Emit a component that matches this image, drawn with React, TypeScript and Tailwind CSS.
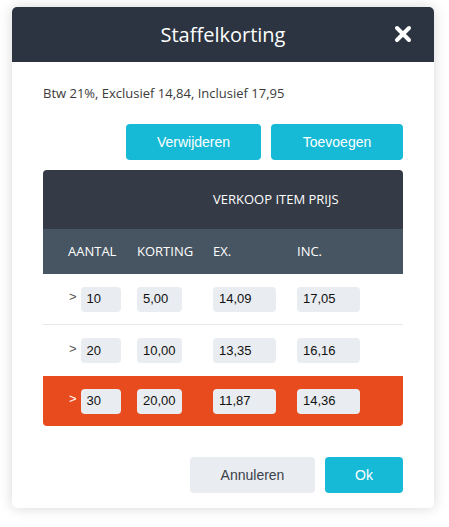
import { X } from 'lucide-react';

const rows = [
  { qty: '10', discount: '5,00', ex: '14,09', inc: '17,05', active: false },
  { qty: '20', discount: '10,00', ex: '13,35', inc: '16,16', active: false },
  { qty: '30', discount: '20,00', ex: '11,87', inc: '14,36', active: true },
];

const openSans = "font-['Open_Sans',sans-serif]";
const arial = "font-['Liberation_Sans',Arial,sans-serif]";

function Field({ value, width }: { value: string; width: string }) {
  return (
    <div className={`${width} h-[25px] rounded-[4px] bg-[#e9ecf0] pl-[6px] flex items-center text-[13px] text-[#111] ${arial}`}>
      {value}
    </div>
  );
}

export default function App() {
  return (
    <div className="min-h-screen w-full bg-white pt-[7px] pl-[12px]">
      <div className="w-[422px] rounded-[5px] bg-white shadow-[0_0_14px_rgba(0,0,0,0.16)] overflow-hidden">
        {/* Header */}
        <div className="relative h-[55px] bg-[#2b3440] flex items-center justify-center">
          <h1 className={`text-[20px] text-white ${openSans}`}>Staffelkorting</h1>
          <X className="absolute right-[19px] top-[15px] text-white" size={24} strokeWidth={4} />
        </div>

        <div className="px-[31px] pt-[22px] pb-[15px]">
          <p className={`text-[13px] leading-[18px] text-[#3b3b3b] ${openSans}`}>Btw 21%, Exclusief 14,84, Inclusief 17,95</p>

          <div className="mt-[22px] flex justify-end gap-[10px]">
            <button className={`w-[135px] h-[36px] rounded-[4px] bg-[#17bad6] text-white text-[14px] ${arial}`}>Verwijderen</button>
            <button className={`w-[132px] h-[36px] rounded-[4px] bg-[#17bad6] text-white text-[14px] ${arial}`}>Toevoegen</button>
          </div>

          {/* Table */}
          <div className={`mt-[10px] rounded-[4px] overflow-hidden ${openSans}`}>
            <div className="h-[59px] bg-[#343a46] grid grid-cols-[94px_76px_84px_1fr] items-center text-[13px] text-white">
              <div />
              <div />
              <div className="col-span-2">VERKOOP ITEM PRIJS</div>
            </div>
            <div className="h-[45px] bg-[#475562] grid grid-cols-[94px_76px_84px_1fr] items-center text-[13px] text-white">
              <div className="pl-[25px]">AANTAL</div>
              <div>KORTING</div>
              <div>EX.</div>
              <div>INC.</div>
            </div>
            {rows.map((r, i) => (
              <div
                key={r.qty}
                className={`grid grid-cols-[94px_76px_84px_1fr] items-center ${
                  r.active ? 'bg-[#e84b1e] h-[50px]' : 'bg-white h-[51px]'
                } ${i === 0 ? 'border-b border-[#e8e8e8]' : ''}`}
              >
                <div className={`flex items-center pl-[26px] gap-[4px] ${arial}`}>
                  <span className={`text-[13px] -mt-[4px] ${r.active ? 'text-white' : 'text-[#555]'}`}>&gt;</span>
                  <Field value={r.qty} width="w-[40px]" />
                </div>
                <Field value={r.discount} width="w-[45px]" />
                <Field value={r.ex} width="w-[63px]" />
                <Field value={r.inc} width="w-[63px]" />
              </div>
            ))}
          </div>

          <div className="mt-[31px] flex justify-end gap-[10px]">
            <button className={`w-[125px] h-[36px] rounded-[4px] bg-[#e9ecf0] text-[#3a3f4a] text-[14px] ${arial}`}>Annuleren</button>
            <button className={`w-[78px] h-[36px] rounded-[4px] bg-[#17bad6] text-white text-[14px] ${arial}`}>Ok</button>
          </div>
        </div>
      </div>
    </div>
  );
}
